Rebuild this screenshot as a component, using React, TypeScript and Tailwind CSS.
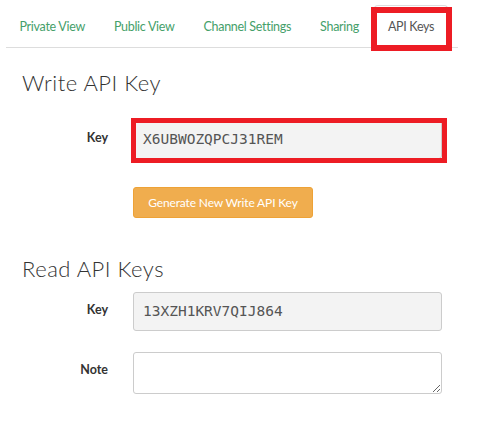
import React from "react";

const tabs = ["Private View", "Public View", "Channel Settings", "Sharing", "API Keys"];

function Row({ label, children, className = "" }: { label: string; children: React.ReactNode; className?: string }) {
  return (
    <div className={`flex items-start ${className}`}>
      <div className="w-[102px] shrink-0 text-right font-bold text-[12.5px] text-[#333] [font-family:Lato,'Open_Sans',sans-serif] pt-[9px]">
        {label}
      </div>
      <div className="ml-[25px] w-[309px]">{children}</div>
    </div>
  );
}

export default function App() {
  return (
    <div className="w-[500px] h-[426px] bg-white overflow-hidden [font-family:Lato,'Open_Sans',sans-serif]">
      <div className="ml-[6px] w-[452px]">
        {/* Tabs */}
        <ul className="flex mt-[5px] border-b border-[#dddddd]">
          {tabs.map((t) => {
            const active = t === "API Keys";
            return (
              <li key={t} className={`relative shrink-0 mr-[2px] ${active ? "-mb-px" : ""}`}>
                <div
                  className={`whitespace-nowrap px-[12.5px] pt-[11px] pb-[9px] leading-[20px] text-[12.5px] tracking-[-0.3px] border ${
                    active
                      ? "text-[#555] bg-white border-[#dddddd] border-b-transparent rounded-t-[4px]"
                      : "text-[#45a06a] border-transparent"
                  }`}
                >
                  {t}
                </div>
                {active && (
                  <div className="absolute left-[-3px] right-[-4px] top-[2px] bottom-[-3px] border-[6px] border-[#ed1c24] pointer-events-none" />
                )}
              </li>
            );
          })}
        </ul>

        {/* Write API Key */}
        <h2 className="mt-[22px] ml-[16px] text-[22px] leading-[26px] font-light text-[#333] tracking-[0.5px]">
          Write API Key
        </h2>

        <Row label="Key" className="mt-[24px]">
          <div className="relative">
            <div className="h-[39px] bg-[#f3f3f3] border border-[#cccccc] rounded-[3px] flex items-center pl-[9px] text-[14.5px] text-[#555] [font-family:'DejaVu_Sans_Mono',monospace]">
              X6UBWOZQPCJ31REM
            </div>
            <div className="absolute left-[-2px] right-[-5px] top-[-2px] bottom-[-4px] border-[5px] border-[#ed1c24] pointer-events-none" />
          </div>
        </Row>

        <div className="ml-[127px] mt-[28px]">
          <button className="w-[180px] h-[31px] bg-[#f0ad4e] border border-[#eea236] rounded-[3px] text-white text-[12px] tracking-[-0.15px] leading-none">
            Generate New Write API Key
          </button>
        </div>

        {/* Read API Keys */}
        <h2 className="mt-[38px] ml-[16px] text-[22px] leading-[26px] font-light text-[#333] tracking-[0.5px]">
          Read API Keys
        </h2>

        <Row label="Key" className="mt-[10px]">
          <div className="h-[39px] bg-[#f3f3f3] border border-[#cccccc] rounded-[3px] flex items-center pl-[9px] text-[14.5px] text-[#555] [font-family:'DejaVu_Sans_Mono',monospace]">
            13XZH1KRV7QIJ864
          </div>
        </Row>

        <Row label="Note" className="mt-[21px]">
          <textarea className="block w-[309px] h-[42px] bg-white border border-[#cccccc] rounded-[3px] resize-y outline-none" />
        </Row>
      </div>
    </div>
  );
}
